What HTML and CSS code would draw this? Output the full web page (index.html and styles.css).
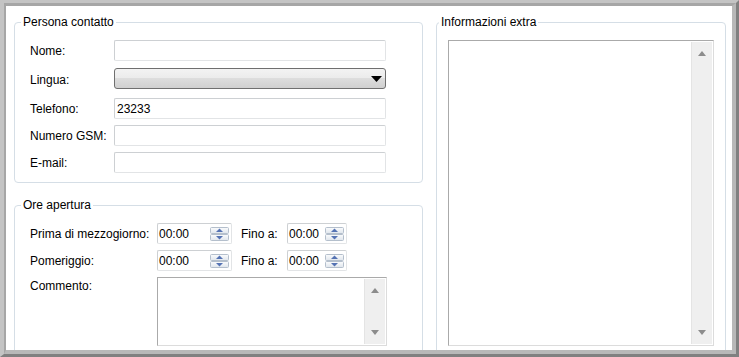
FILE: index.html
```html
<!DOCTYPE html>
<html>
    <head>
        <meta charset="UTF-8">
        <title>Contatto</title>
        <link rel="stylesheet" href="styles.css">
    </head>
    <body>
        <div class="window">
            <div class="panel">
                <div class="left-col">
                    <fieldset class="group contact">
                        <legend>Persona contatto</legend>
                        <div class="contact-grid">
                            <label>Nome:</label>
                            <div class="field"></div>
                            <label>Lingua:</label>
                            <div class="combo">
                                <svg width="11" height="6" viewBox="0 0 11 6"><path d="M0 0 H11 L5.5 6 Z" fill="#000"/></svg>
                            </div>
                            <label>Telefono:</label>
                            <div class="field">23233</div>
                            <label>Numero GSM:</label>
                            <div class="field"></div>
                            <label>E-mail:</label>
                            <div class="field"></div>
                        </div>
                    </fieldset>

                    <fieldset class="group hours">
                        <legend>Ore apertura</legend>
                        <div class="time-row">
                            <label class="time-label">Prima di mezzogiorno:</label>
                            <div class="spin-box">
                                <span>00:00</span>
                                <svg class="spin" width="19" height="14" viewBox="0 0 19 14"><use href="#spin"/></svg>
                            </div>
                            <label class="until">Fino a:</label>
                            <div class="spin-box short">
                                <span>00:00</span>
                                <svg class="spin" width="19" height="14" viewBox="0 0 19 14"><use href="#spin"/></svg>
                            </div>
                        </div>
                        <div class="time-row">
                            <label class="time-label">Pomeriggio:</label>
                            <div class="spin-box">
                                <span>00:00</span>
                                <svg class="spin" width="19" height="14" viewBox="0 0 19 14"><use href="#spin"/></svg>
                            </div>
                            <label class="until">Fino a:</label>
                            <div class="spin-box short">
                                <span>00:00</span>
                                <svg class="spin" width="19" height="14" viewBox="0 0 19 14"><use href="#spin"/></svg>
                            </div>
                        </div>
                        <div class="time-row comment-row">
                            <label class="time-label">Commento:</label>
                            <div class="memo small">
                                <div class="scrollbar">
                                    <svg width="8" height="5" viewBox="0 0 8 5"><path d="M4 0 L8 5 H0 Z" fill="#8c8c8c"/></svg>
                                    <svg width="8" height="5" viewBox="0 0 8 5"><path d="M0 0 H8 L4 5 Z" fill="#8c8c8c"/></svg>
                                </div>
                            </div>
                        </div>
                    </fieldset>
                </div>

                <fieldset class="group extra">
                    <legend>Informazioni extra</legend>
                    <div class="memo big">
                        <div class="scrollbar">
                            <svg width="8" height="5" viewBox="0 0 8 5"><path d="M4 0 L8 5 H0 Z" fill="#8c8c8c"/></svg>
                            <svg width="8" height="5" viewBox="0 0 8 5"><path d="M0 0 H8 L4 5 Z" fill="#8c8c8c"/></svg>
                        </div>
                    </div>
                </fieldset>
            </div>
        </div>

        <!-- shared spin button drawing -->
        <svg width="0" height="0" class="defs">
            <defs>
                <linearGradient id="btn" x1="0" y1="0" x2="0" y2="1">
                    <stop offset="0" stop-color="#fbfcfd"/>
                    <stop offset="1" stop-color="#dfe5ec"/>
                </linearGradient>
                <g id="spin">
                    <rect x="0.5" y="0.5" width="18" height="6" rx="1" fill="url(#btn)" stroke="#b4bfcc"/>
                    <rect x="0.5" y="7.5" width="18" height="6" rx="1" fill="url(#btn)" stroke="#b4bfcc"/>
                    <path d="M9.5 1.5 L13 5 H6 Z" fill="#5573b3"/>
                    <path d="M6 9 H13 L9.5 12.5 Z" fill="#5573b3"/>
                </g>
            </defs>
        </svg>
    </body>
</html>
```

FILE: styles.css
```css
body {
    margin: 0;
    font-family: "Liberation Sans", Arial, sans-serif;
    font-size: 12px;
    color: #000;
    background: #fff;
}
.window {
    width: 739px;
    height: 357px;
    box-sizing: border-box;
    border-style: solid;
    border-width: 3px 3px 3px 4px;
    border-color: #c4c4c4 #808080 #808080 #c4c4c4;
}
.panel {
    height: 100%;
    box-sizing: border-box;
    border-style: solid;
    border-width: 3px 4px 4px 2px;
    border-color: #a6a6a6 #b8b8b8 #b8b8b8 #a6a6a6;
    background: #fff;
    overflow: hidden;
    display: grid;
    grid-template-columns: 409px 290px;
    column-gap: 13px;
    align-items: start;
    padding: 9px 0 0 8px;
}
.left-col {
    display: flex;
    flex-direction: column;
    gap: 15px;
}
.group {
    margin: 0;
    min-width: 0;
    border: 1px solid #d5dee6;
    border-radius: 4px;
    padding: 11px 0 9px 15px;
}
.group legend {
    padding: 0 2px;
    margin-left: -9px;
    line-height: 14px;
}
.contact-grid {
    display: grid;
    grid-template-columns: 84px 272px;
    row-gap: 6px;
    align-items: center;
}
.field {
    height: 21px;
    box-sizing: border-box;
    border: 1px solid;
    border-color: #cdd0d3 #e2e4e6 #e2e4e6 #cdd0d3;
    border-radius: 2px;
    padding: 3px 2px 0;
}
.combo {
    height: 21px;
    margin: 1px 0 3px;
    box-sizing: border-box;
    border: 1px solid #6f6f6f;
    border-radius: 3px;
    background: linear-gradient(#f3f3f3, #ebebeb 50%, #dddddd 50%, #d0d0d0);
    display: flex;
    align-items: center;
    justify-content: flex-end;
    padding-right: 3px;
}
.hours {
    padding-bottom: 12px;
}
.time-row {
    display: flex;
    align-items: center;
    margin-bottom: 6px;
}
.time-label {
    width: 127px;
}
.until {
    width: 46px;
    margin-left: 9px;
}
.spin-box {
    width: 75px;
    height: 21px;
    box-sizing: border-box;
    border: 1px solid;
    border-color: #cdd0d3 #e2e4e6 #e2e4e6 #cdd0d3;
    border-radius: 2px;
    display: flex;
    align-items: center;
    justify-content: space-between;
    padding: 0 2px 0 1px;
}
.spin-box.short {
    width: 60px;
}
.spin {
    display: block;
}
.comment-row {
    align-items: flex-start;
    margin-bottom: 0;
}
.comment-row .time-label {
    padding-top: 2px;
}
.memo {
    box-sizing: border-box;
    border: 1px solid;
    border-color: #aaaaaa #dcdcdc #dcdcdc #aaaaaa;
    display: flex;
    justify-content: flex-end;
    padding: 1px;
}
.memo.small {
    width: 230px;
    height: 69px;
}
.extra {
    padding: 11px 0 10px 11px;
}
.memo.big {
    width: 266px;
    height: 306px;
}
.scrollbar {
    width: 20px;
    background: #efefef;
    border-left: 1px solid #e4e4e4;
    display: flex;
    flex-direction: column;
    justify-content: space-between;
    align-items: center;
    padding: 9px 0 9px;
}
.scrollbar svg {
    display: block;
}
.defs {
    position: absolute;
}
```
